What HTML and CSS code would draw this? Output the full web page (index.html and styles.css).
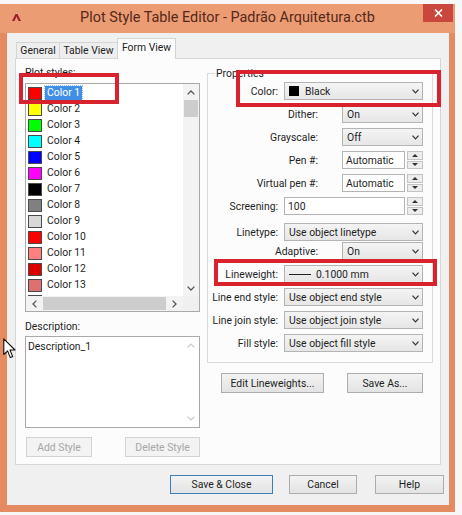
FILE: index.html
```html
<!DOCTYPE html>
<html>
<head>
<meta charset="utf-8">
<title>Plot Style Table Editor</title>
<link rel="stylesheet" href="styles.css">
</head>
<body>
<div class="window">
  <div class="titlebar">
    <div class="tb-left">
      <svg class="app-icon" width="9" height="9" viewBox="0 0 9 9"><path d="M0 9 L4.5 0 L9 9 L6.6 9 L4.5 4.6 L2.4 9 Z" fill="#9c1a2e"/><path d="M3.4 2.1 L4.5 0 L5.6 2.1 Z" fill="#e9c0c0"/></svg>
    </div>
    <div class="title">Plot Style Table Editor - Padrão Arquitetura.ctb</div>
    <div class="tb-right">
      <div class="close"><svg width="9" height="8" viewBox="0 0 9 8"><path d="M1 0.5 L8 7.5 M8 0.5 L1 7.5" stroke="#fff" stroke-width="1.6"/></svg></div>
    </div>
  </div>
  <div class="frame-body">
    <div class="client">
      <div class="tabs">
        <div class="tab tab-general">General</div>
        <div class="tab tab-table">Table View</div>
        <div class="tab tab-form active">Form View</div>
      </div>
      <div class="panel">
        <div class="left-col">
          <div class="lbl">Plot styles:</div>
          <div class="listbox">
            <div class="list-items">
              <div class="item"><span class="sw" style="background:#ff0000"></span><span class="name sel">Color 1</span></div>
              <div class="item"><span class="sw" style="background:#ffff00"></span><span class="name">Color 2</span></div>
              <div class="item"><span class="sw" style="background:#00ff00"></span><span class="name">Color 3</span></div>
              <div class="item"><span class="sw" style="background:#00ffff"></span><span class="name">Color 4</span></div>
              <div class="item"><span class="sw" style="background:#0000ff"></span><span class="name">Color 5</span></div>
              <div class="item"><span class="sw" style="background:#ff00ff"></span><span class="name">Color 6</span></div>
              <div class="item"><span class="sw" style="background:#000000"></span><span class="name">Color 7</span></div>
              <div class="item"><span class="sw" style="background:#808080"></span><span class="name">Color 8</span></div>
              <div class="item"><span class="sw" style="background:#d8d8d8"></span><span class="name">Color 9</span></div>
              <div class="item"><span class="sw" style="background:#ff0000"></span><span class="name">Color 10</span></div>
              <div class="item"><span class="sw" style="background:#ff8080"></span><span class="name">Color 11</span></div>
              <div class="item"><span class="sw" style="background:#dd0000"></span><span class="name">Color 12</span></div>
              <div class="item"><span class="sw" style="background:#dd7070"></span><span class="name">Color 13</span></div>
              <div class="item"><span class="sw" style="background:#990000"></span><span class="name">Color 14</span></div>
            </div>
            <div class="vscroll">
              <div class="sb-btn"><svg width="8" height="5" viewBox="0 0 8 5"><polyline points="0.6,4.4 4,1 7.4,4.4" fill="none" stroke="#555" stroke-width="1.3"/></svg></div>
              <div class="vthumb"></div>
              <div class="sb-fill"></div>
              <div class="sb-btn"><svg width="8" height="5" viewBox="0 0 8 5"><polyline points="0.6,0.6 4,4 7.4,0.6" fill="none" stroke="#555" stroke-width="1.3"/></svg></div>
            </div>
            <div class="hscroll">
              <div class="sb-btn h"><svg width="5" height="8" viewBox="0 0 5 8"><polyline points="4.4,0.6 1,4 4.4,7.4" fill="none" stroke="#555" stroke-width="1.3"/></svg></div>
              <div class="hthumb"></div>
              <div class="sb-fill"></div>
              <div class="sb-btn h"><svg width="5" height="8" viewBox="0 0 5 8"><polyline points="0.6,0.6 4,4 0.6,7.4" fill="none" stroke="#555" stroke-width="1.3"/></svg></div>
            </div>
            <div class="corner"></div>
          </div>
          <div class="lbl desc-lbl">Description:</div>
          <div class="textarea">
            <div class="ta-text">Description_1</div>
            <div class="ta-scroll">
              <svg width="8" height="5" viewBox="0 0 8 5"><polyline points="0.6,4.4 4,1 7.4,4.4" fill="none" stroke="#c8c8c8" stroke-width="1.2"/></svg>
              <svg width="8" height="5" viewBox="0 0 8 5"><polyline points="0.6,0.6 4,4 7.4,0.6" fill="none" stroke="#c8c8c8" stroke-width="1.2"/></svg>
            </div>
          </div>
          <div class="left-buttons">
            <div class="btn disabled add">Add Style</div>
            <div class="btn disabled del">Delete Style</div>
          </div>
        </div>
        <div class="right-col">
          <fieldset class="group">
            <legend>Properties</legend>
            <div class="row full">
              <span class="plabel">Color:</span>
              <div class="combo"><span class="black-sw"></span><span>Black</span><svg class="chev" width="7" height="5" viewBox="0 0 7 5"><polyline points="0.5,0.7 3.5,3.8 6.5,0.7" fill="none" stroke="#333" stroke-width="1.2"/></svg></div>
            </div>
            <div class="row short">
              <span class="plabel">Dither:</span>
              <div class="combo"><span>On</span><svg class="chev" width="7" height="5" viewBox="0 0 7 5"><polyline points="0.5,0.7 3.5,3.8 6.5,0.7" fill="none" stroke="#333" stroke-width="1.2"/></svg></div>
            </div>
            <div class="row short">
              <span class="plabel">Grayscale:</span>
              <div class="combo"><span>Off</span><svg class="chev" width="7" height="5" viewBox="0 0 7 5"><polyline points="0.5,0.7 3.5,3.8 6.5,0.7" fill="none" stroke="#333" stroke-width="1.2"/></svg></div>
            </div>
            <div class="row short">
              <span class="plabel">Pen #:</span>
              <div class="spin"><div class="field">Automatic</div><div class="spinbtns"><div class="sbt"><span class="tri up"></span></div><div class="sbt"><span class="tri down"></span></div></div></div>
            </div>
            <div class="row short">
              <span class="plabel">Virtual pen #:</span>
              <div class="spin"><div class="field">Automatic</div><div class="spinbtns"><div class="sbt"><span class="tri up"></span></div><div class="sbt"><span class="tri down"></span></div></div></div>
            </div>
            <div class="row full">
              <span class="plabel">Screening:</span>
              <div class="spin"><div class="field">100</div><div class="spinbtns"><div class="sbt"><span class="tri up"></span></div><div class="sbt"><span class="tri down"></span></div></div></div>
            </div>
            <div class="row full linetype">
              <span class="plabel">Linetype:</span>
              <div class="combo"><span>Use object linetype</span><svg class="chev" width="7" height="5" viewBox="0 0 7 5"><polyline points="0.5,0.7 3.5,3.8 6.5,0.7" fill="none" stroke="#333" stroke-width="1.2"/></svg></div>
            </div>
            <div class="row short adaptive">
              <span class="plabel">Adaptive:</span>
              <div class="combo"><span>On</span><svg class="chev" width="7" height="5" viewBox="0 0 7 5"><polyline points="0.5,0.7 3.5,3.8 6.5,0.7" fill="none" stroke="#333" stroke-width="1.2"/></svg></div>
            </div>
            <div class="row full">
              <span class="plabel">Lineweight:</span>
              <div class="combo"><span class="lw-line"></span><span>0.1000 mm</span><svg class="chev" width="7" height="5" viewBox="0 0 7 5"><polyline points="0.5,0.7 3.5,3.8 6.5,0.7" fill="none" stroke="#333" stroke-width="1.2"/></svg></div>
            </div>
            <div class="row full">
              <span class="plabel">Line end style:</span>
              <div class="combo"><span>Use object end style</span><svg class="chev" width="7" height="5" viewBox="0 0 7 5"><polyline points="0.5,0.7 3.5,3.8 6.5,0.7" fill="none" stroke="#333" stroke-width="1.2"/></svg></div>
            </div>
            <div class="row full">
              <span class="plabel">Line join style:</span>
              <div class="combo"><span>Use object join style</span><svg class="chev" width="7" height="5" viewBox="0 0 7 5"><polyline points="0.5,0.7 3.5,3.8 6.5,0.7" fill="none" stroke="#333" stroke-width="1.2"/></svg></div>
            </div>
            <div class="row full">
              <span class="plabel">Fill style:</span>
              <div class="combo"><span>Use object fill style</span><svg class="chev" width="7" height="5" viewBox="0 0 7 5"><polyline points="0.5,0.7 3.5,3.8 6.5,0.7" fill="none" stroke="#333" stroke-width="1.2"/></svg></div>
            </div>
          </fieldset>
          <div class="right-buttons">
            <div class="btn edit-lw">Edit Lineweights...</div>
            <div class="btn save-as">Save As...</div>
          </div>
        </div>
      </div>
      <div class="footer">
        <div class="btn default save-close">Save &amp; Close</div>
        <div class="btn cancel">Cancel</div>
        <div class="btn help">Help</div>
      </div>
    </div>
  </div>
</div>

<div class="hl hl1"></div>
<div class="hl hl2"></div>
<div class="hl hl3"></div>

<svg class="cursor" width="13" height="21" viewBox="0 0 13 21"><path d="M0.8 0.8 L0.8 16.5 L4.6 12.9 L7.3 19.6 L9.7 18.6 L7 12 L12 12 Z" fill="#fff" stroke="#111" stroke-width="1.1" stroke-linejoin="round"/></svg>
</body>
</html>
```

FILE: styles.css
```css
* { box-sizing: border-box; }
html, body { margin: 0; padding: 0; }
body {
  width: 462px;
  height: 515px;
  overflow: hidden;
  position: relative;
  background: #f7f7f7;
  font-family: Roboto, "Liberation Sans", sans-serif;
  font-size: 10.4px;
  color: #1f1f1f;
}

.window {
  margin-top: 4px;
  width: 455px;
  height: 508px;
  background: #e58b62;
  display: flex;
  flex-direction: column;
}

.titlebar {
  height: 29px;
  display: grid;
  grid-template-columns: 1fr auto 1fr;
  background: #eb9c73;
}
.tb-left { display: flex; align-items: center; padding-left: 12px; padding-bottom: 4px; }
.title {
  font-size: 14.4px;
  line-height: 27px;
  color: #55281b;
  white-space: nowrap;
}
.tb-right { display: flex; justify-content: flex-end; align-items: flex-start; padding-right: 2px; }
.close {
  width: 30px;
  height: 18px;
  background: #c9473c;
  display: flex;
  align-items: center;
  justify-content: center;
}

.frame-body { flex: 1; padding: 0 6px 7px 7px; }
.client {
  height: 100%;
  background: #f0f0f0;
  padding: 2px 0 0 8px;
  display: flex;
  flex-direction: column;
}

/* tabs */
.tabs {
  height: 23px;
  display: flex;
  align-items: flex-end;
  padding-left: 1px;
  position: relative;
  z-index: 1;
}
.tab {
  height: 16px;
  border: 1px solid #d4d4d4;
  border-bottom: none;
  background: #eeeeee;
  display: flex;
  align-items: center;
  justify-content: center;
  white-space: nowrap;
  color: #222;
}
.tab-general { width: 44px; }
.tab-table { width: 59px; margin-left: -1px; }
.tab-form { width: 59px; margin-left: -1px; }
.tab.active {
  height: 21px;
  margin-bottom: -1px;
  background: #fcfcfc;
  padding-bottom: 3px;
}

.panel {
  width: 426px;
  height: 407px;
  border: 1px solid #d6d6d6;
  background: #fcfcfc;
  display: flex;
  padding: 7px 7px 0 9px;
}

/* left column */
.left-col { width: 175px; display: flex; flex-direction: column; }
.lbl { height: 13px; line-height: 13px; white-space: nowrap; }
.desc-lbl { margin-top: 8px; }

.listbox {
  margin-top: 4px;
  width: 175px;
  height: 229px;
  border: 1px solid #a9a9a9;
  background: #fff;
  display: grid;
  grid-template-columns: 1fr 16px;
  grid-template-rows: 1fr 15px;
}
.list-items { overflow: hidden; padding: 1px 0 0 2px; }
.item { height: 16px; display: flex; align-items: center; }
.sw {
  width: 14px;
  height: 13px;
  border: 1px solid #4a4a4a;
  margin-right: 3px;
  flex: none;
}
.name { padding: 0 2px; line-height: 14px; white-space: nowrap; }
.name.sel { background: #3f8fe6; color: #fff; outline: 1px dotted #9cc4ef; }

.vscroll {
  background: #f3f3f3;
  display: flex;
  flex-direction: column;
}
.sb-btn { height: 16px; display: flex; align-items: center; justify-content: center; flex: none; }
.sb-btn.h { width: 17px; height: 15px; }
.vthumb { height: 17px; margin: 0 1px; background: #cdcdcd; flex: none; }
.sb-fill { flex: 1; }
.hscroll {
  background: #f3f3f3;
  display: flex;
}
.hthumb { width: 123px; margin: 1px 0; background: #cdcdcd; flex: none; }
.corner { background: #f0f0f0; }

.textarea {
  margin-top: 3px;
  height: 92px;
  border: 1px solid #a9a9a9;
  background: #fff;
  display: flex;
}
.ta-text { flex: 1; padding: 3px 0 0 2px; line-height: 13px; }
.ta-scroll {
  width: 16px;
  display: flex;
  flex-direction: column;
  justify-content: space-between;
  align-items: center;
  padding: 6px 0 6px;
}

.left-buttons {
  margin-top: 9px;
  display: flex;
  justify-content: space-between;
  padding-left: 1px;
}

/* buttons */
.btn {
  height: 20px;
  border: 1px solid #adadad;
  background: linear-gradient(#f3f3f3, #e3e3e3);
  display: flex;
  align-items: center;
  justify-content: center;
  white-space: nowrap;
  color: #1f1f1f;
}
.btn.disabled {
  border-color: #d3d3d3;
  background: #f3f3f3;
  color: #a6a6a6;
}
.add { width: 66px; }
.del { width: 75px; }

/* right column */
.right-col { width: 226px; margin-left: 7px; display: flex; flex-direction: column; }
.group {
  margin: 1px 0 0;
  padding: 2px 0 10px 0;
  border: 1px solid #dadada;
  min-width: 0;
}
.group legend {
  padding: 0 1px;
  margin-left: 7px;
  line-height: 13px;
}
.row { display: flex; align-items: center; height: 18px; margin-top: 5px; }
.row:first-of-type { margin-top: 0; }
.row.linetype { margin-top: 8px; }
.row.adaptive { margin-top: 1px; }
.plabel { text-align: right; white-space: nowrap; flex: none; }
.row.full .plabel { width: 70px; margin-right: 6px; }
.row.short .plabel { width: 110px; margin-right: 24px; }
.row.full .combo, .row.full .spin { width: 139px; }
.row.short .combo, .row.short .spin { width: 81px; }

.combo {
  height: 18px;
  border: 1px solid #b4b4b4;
  background: linear-gradient(#f4f4f4, #e6e6e6);
  display: flex;
  align-items: center;
  padding-left: 4px;
  white-space: nowrap;
}
.combo .chev { margin-left: auto; margin-right: 3px; flex: none; }
.black-sw { width: 10px; height: 10px; background: #000; margin-right: 6px; flex: none; }
.lw-line { width: 22px; height: 1px; background: #222; margin-right: 5px; flex: none; }

.spin { height: 18px; display: flex; gap: 2px; }
.spin .field {
  flex: 1;
  border: 1px solid #b4b4b4;
  background: #fff;
  padding-left: 3px;
  display: flex;
  align-items: center;
}
.spinbtns { width: 16px; display: flex; flex-direction: column; gap: 1px; }
.sbt {
  flex: 1;
  border: 1px solid #c4c4c4;
  background: #ededed;
  display: flex;
  align-items: center;
  justify-content: center;
}
.tri { width: 0; height: 0; border-left: 3px solid transparent; border-right: 3px solid transparent; }
.tri.up { border-bottom: 3px solid #333; }
.tri.down { border-top: 3px solid #333; }

.right-buttons {
  margin-top: 10px;
  display: flex;
  padding-left: 14px;
  gap: 23px;
}
.edit-lw { width: 103px; }
.save-as { width: 76px; }

/* footer */
.footer {
  margin-top: 10px;
  display: flex;
  justify-content: flex-end;
  padding-right: 5px;
}
.footer .btn { height: 19px; }
.save-close { width: 103px; border-color: #3d7fb8; }
.cancel { width: 68px; margin-left: 16px; }
.help { width: 69px; margin-left: 18px; }

/* red annotation boxes */
.hl { position: absolute; border: 4px solid #d8232f; }
.hl1 { left: 19px; top: 73px; width: 100px; height: 31px; }
.hl2 { left: 236px; top: 70px; width: 205px; height: 37px; }
.hl3 { left: 214px; top: 259px; width: 223px; height: 27px; }

.cursor { position: absolute; left: 3px; top: 338px; }
```
